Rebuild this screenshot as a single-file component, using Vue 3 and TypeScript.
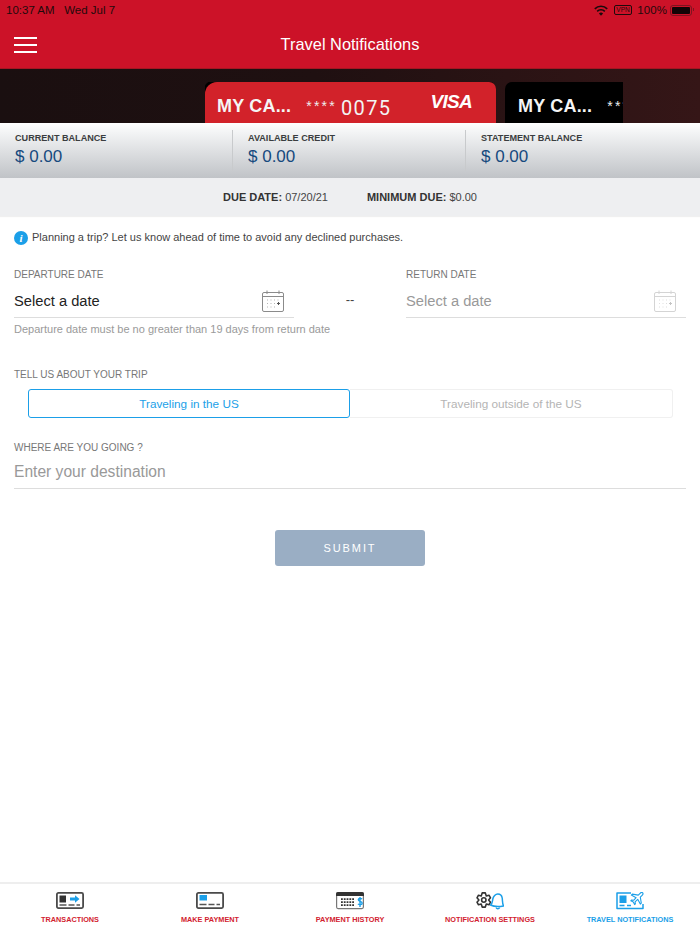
<script setup lang="ts">
const balances = [
  { label: 'CURRENT BALANCE', value: '$ 0.00' },
  { label: 'AVAILABLE CREDIT', value: '$ 0.00' },
  { label: 'STATEMENT BALANCE', value: '$ 0.00' }
]
</script>

<template>
  <div class="page">
    <header class="top">
      <div class="status">
        <span class="status-left">10:37 AM &nbsp; Wed Jul 7</span>
        <div class="status-right">
          <svg class="wifi" viewBox="0 0 14 11" width="14" height="11" fill="none" stroke="#1a0a0c" stroke-width="1.700">
            <path d="M.8 3.800a8.800 8.800 0 0 1 12.400 0"/>
            <path d="M3.200 6.300a5.400 5.400 0 0 1 7.600 0"/>
            <path d="M7 10.800 4.900 8.500a3 3 0 0 1 4.200 0z" fill="#1a0a0c" stroke="none"/>
          </svg>
          <span class="vpn">VPN</span>
          <span class="pct">100%</span>
          <span class="battery"><i></i></span>
        </div>
      </div>
      <div class="titlebar">
        <button class="burger" aria-label="Menu"><i></i><i></i><i></i></button>
        <h1>Travel Notifications</h1>
      </div>
    </header>

    <section class="cards">
      <div class="card-strip">
        <div class="card red">
          <span class="card-name">MY CA...</span>
          <span class="stars">****</span>
          <span class="digits">0075</span>
          <span class="visa">VISA</span>
        </div>
        <div class="card black">
          <span class="card-name">MY CA...</span>
          <span class="stars">****</span>
        </div>
      </div>
    </section>

    <section class="balances">
      <div v-for="b in balances" :key="b.label" class="balance">
        <div class="balance-label">{{ b.label }}</div>
        <div class="balance-value">{{ b.value }}</div>
      </div>
    </section>

    <section class="due">
      <span><b>DUE DATE:</b> 07/20/21</span>
      <span><b>MINIMUM DUE:</b> $0.00</span>
    </section>

    <main class="content">
      <p class="info">
        <span class="info-icon">i</span>
        Planning a trip? Let us know ahead of time to avoid any declined purchases.
      </p>

      <div class="dates">
        <div class="date-col">
          <label class="field-label">DEPARTURE DATE</label>
          <div class="date-input">
            <span class="date-text">Select a date</span>
            <svg class="cal" viewBox="0 0 24 24" width="24" height="24" fill="none" stroke="#8b8b8b">
              <rect x="1.500" y="3.500" width="21" height="19" rx="1.500"/>
              <path d="M1.500 7.500h21M6 1.500v3.500M18 1.500v3.500"/>
              <path d="M6 11h1M9.500 11h1M13 11h1M16.500 11h1M6 14.500h1M9.500 14.500h1M13 14.500h1M6 18h1M9.500 18h1M13 18h1" stroke="#b5b5b5"/>
              <path d="M16 14.500h3M17.500 13v3" stroke="#555"/>
            </svg>
          </div>
          <p class="hint">Departure date must be no greater than 19 days from return date</p>
        </div>
        <div class="dash">--</div>
        <div class="date-col">
          <label class="field-label">RETURN DATE</label>
          <div class="date-input">
            <span class="date-text muted">Select a date</span>
            <svg class="cal" viewBox="0 0 24 24" width="24" height="24" fill="none" stroke="#d4d4d4">
              <rect x="1.500" y="3.500" width="21" height="19" rx="1.500"/>
              <path d="M1.500 7.500h21M6 1.500v3.500M18 1.500v3.500"/>
              <path d="M6 11h1M9.500 11h1M13 11h1M16.500 11h1M6 14.500h1M9.500 14.500h1M13 14.500h1M6 18h1M9.500 18h1M13 18h1" stroke="#dedede"/>
              <path d="M16 14.500h3M17.500 13v3" stroke="#c4c4c4"/>
            </svg>
          </div>
        </div>
      </div>

      <label class="field-label trip-label">TELL US ABOUT YOUR TRIP</label>
      <div class="segments">
        <div class="segment active">Traveling in the US</div>
        <div class="segment">Traveling outside of the US</div>
      </div>

      <label class="field-label where-label">WHERE ARE YOU GOING ?</label>
      <div class="destination">Enter your destination</div>

      <button class="submit">SUBMIT</button>
    </main>

    <nav class="tabs">
      <a class="tab">
        <svg viewBox="0 0 28 18" width="28" height="18" fill="none">
          <rect x=".9" y=".9" width="26.200" height="15.200" rx="1.500" stroke="#4a4a4a" stroke-width="1.800"/>
          <rect x="3.500" y="3.500" width="6.500" height="7" fill="#333"/>
          <path d="M14 5.500h5V3.300L23.500 7 19 10.700V8.500h-5z" fill="#1b9fe8"/>
          <path d="M3.500 13h7M12.500 13h6M20.500 13h3.500" stroke="#555" stroke-width="1.300"/>
        </svg>
        <span>TRANSACTIONS</span>
      </a>
      <a class="tab">
        <svg viewBox="0 0 28 18" width="28" height="18" fill="none">
          <rect x=".9" y=".9" width="26.200" height="15.200" rx="1.500" stroke="#4a4a4a" stroke-width="1.800"/>
          <rect x="3.500" y="3" width="7.500" height="5.500" fill="#1b9fe8"/>
          <path d="M3.500 12.500h7M12.500 12.500h6M20.500 12.500h3.500" stroke="#555" stroke-width="1.300"/>
        </svg>
        <span>MAKE PAYMENT</span>
      </a>
      <a class="tab">
        <svg viewBox="0 0 28 18" width="28" height="18" fill="none">
          <rect x=".6" y=".6" width="26.800" height="16" rx="1.500" stroke="#777" stroke-width="1.200"/>
          <path d="M0 2a2 2 0 0 1 2-2h24a2 2 0 0 1 2 2v2H0z" fill="#333"/>
          <path d="M5 7.200h14M5 10.200h14M5 13.200h14" stroke="#333" stroke-width="1.800" stroke-dasharray="1.800 1"/>
          <path d="M26 7.200c-.6-1-3.700-1.200-3.700.6 0 2 3.900 1.300 3.900 3.400 0 1.900-3.300 1.800-4.200.6M24 5v10" stroke="#1b9fe8" stroke-width="1.400"/>
        </svg>
        <span>PAYMENT HISTORY</span>
      </a>
      <a class="tab">
        <svg viewBox="0 0 28 18" width="28" height="18" fill="none">
          <path d="M5.200 3.900 6.200.9h3.100l1 3 2.700-.7 1.500 2.600-1.900 2.200 1.900 2.200-1.500 2.600-2.700-.7-1 3H6.200l-1-3-2.700.7L1 10.200 2.900 8 1 5.800l1.500-2.600z" stroke="#333" stroke-width="1.600" stroke-linejoin="round"/>
          <circle cx="7.800" cy="8" r="2.200" stroke="#333" stroke-width="1.600"/>
          <path d="M14.500 13c2-1.500 1.800-3.500 2.300-6 .5-2.500 2.700-5 5-5s4 1.500 4.400 4c.4 2.500 0 5 1.300 8-4.500.8-9.500.8-13-1z" stroke="#1b9fe8" stroke-width="1.500" stroke-linejoin="round" fill="#fff"/>
          <path d="M20 15.500c.8 1.600 2.700 1.700 3.700.2" stroke="#1b9fe8" stroke-width="1.400"/>
        </svg>
        <span>NOTIFICATION SETTINGS</span>
      </a>
      <a class="tab current">
        <svg viewBox="0 0 28 18" width="28" height="18" fill="none">
          <path d="M15 1H1v15.500h26V12" stroke="#1b9fe8" stroke-width="1.500" stroke-linejoin="round"/>
          <rect x="3.500" y="3.500" width="7" height="7.500" fill="#1b9fe8"/>
          <path d="M3.500 13.500h5M11 13.500h4" stroke="#1b9fe8" stroke-width="1.300"/>
          <path d="M26.800.9c-.8-.8-2-.3-2.700.4l-1.800 1.800-6-1-1 1 4.800 2.600-2.500 2.600-2-.3-.8.800 2.500 1.300 1.300 2.500.8-.8-.3-2 2.600-2.500 2.600 4.800 1-1-1-6 1.800-1.800c.7-.7 1.400-1.400.7-2.200z" stroke="#1b9fe8" stroke-width="1.100" stroke-linejoin="round" fill="#fff"/>
        </svg>
        <span>TRAVEL NOTIFICATIONS</span>
      </a>
    </nav>
  </div>
</template>

<style>
html, body {
  margin: 0;
  background: #fff;
}
</style>

<style scoped>
.page {
  width: 700px;
  height: 934px;
  display: flex;
  flex-direction: column;
  overflow: hidden;
  font-family: "Liberation Sans", Arial, sans-serif;
  background: #fff;
}

.top {
  height: 69px;
  flex: none;
  background: #cc1228;
  box-sizing: border-box;
  border-bottom: 1px solid #a51522;
}

.status {
  height: 20px;
  padding: 0 6px;
  display: flex;
  justify-content: space-between;
  align-items: center;
  font-size: 11.500px;
  color: #1f0a0c;
}

.status-right {
  display: flex;
  align-items: center;
}

.pct {
  font-size: 11.500px;
  letter-spacing: 0.1px;
  margin-left: 5px;
}

.vpn {
  border: 1px solid #1f0a0c;
  border-radius: 2px;
  font-size: 6.500px;
  line-height: 8px;
  padding: 0 1.500px;
  margin-left: 6px;
}

.battery {
  width: 18px;
  height: 7px;
  border: 1px solid #7d1420;
  border-radius: 3px;
  padding: 1px;
  margin-left: 3px;
  margin-right: 2px;
  position: relative;
}

.battery::after {
  content: '';
  position: absolute;
  right: -3px;
  top: 2px;
  width: 1.500px;
  height: 3px;
  background: #7d1420;
}

.battery i {
  display: block;
  width: 100%;
  height: 100%;
  background: #120406;
  border-radius: 1px;
}

.titlebar {
  height: 48px;
  position: relative;
  display: flex;
  align-items: center;
  justify-content: center;
}

.titlebar h1 {
  margin: 0;
  font-size: 16.400px;
  font-weight: 400;
  color: #fff;
}

.burger {
  position: absolute;
  left: 14px;
  top: 17px;
  width: 23px;
  padding: 0;
  border: 0;
  background: none;
  display: flex;
  flex-direction: column;
  gap: 5px;
}

.burger i {
  display: block;
  height: 2px;
  background: #fff;
}

.cards {
  height: 54px;
  flex: none;
  background: linear-gradient(90deg, #1a0f10 0%, #1f1011 45%, #351617 100%);
  padding: 13px 0 0 205px;
  box-sizing: border-box;
  overflow: hidden;
}

.card-strip {
  display: flex;
  gap: 9px;
  width: 418px;
  height: 41px;
  overflow: hidden;
}

.card {
  flex: none;
  height: 41px;
  border-radius: 7px 7px 0 0;
  display: flex;
  align-items: center;
  color: #fff;
  box-sizing: border-box;
  padding-top: 8px;
  white-space: nowrap;
}

.card.red {
  width: 291px;
  background: #d2222a;
  padding-left: 12px;
  border-top-left-radius: 12px;
  box-shadow: -2px -2px 0 #000;
}

.card.black {
  width: 160px;
  background: #000;
  padding-left: 13px;
}

.card-name {
  font-size: 18px;
  font-weight: 700;
  color: #f5f5f5;
  letter-spacing: 0.2px;
}

.stars {
  font-size: 14px;
  margin-left: 15px;
  color: #eee;
  letter-spacing: 2.200px;
  position: relative;
  top: -1px;
}

.digits {
  font-family: Roboto, "Liberation Sans", sans-serif;
  font-weight: 400;
  font-size: 20px;
  letter-spacing: 1.400px;
  margin-left: 4px;
  color: #f3f3f3;
  position: relative;
  top: 1px;
}

.visa {
  font-size: 19px;
  font-weight: 700;
  font-style: italic;
  margin-left: 39px;
  letter-spacing: -0.700px;
  position: relative;
  top: -5px;
}

.balances {
  height: 55px;
  flex: none;
  display: grid;
  grid-template-columns: 233px 233px 1fr;
  background: linear-gradient(180deg, #ffffff 0%, #f4f5f6 15%, #c0c3c7 100%);
  box-sizing: border-box;
  padding-top: 7px;
}

.balance {
  padding-left: 15px;
  height: 41px;
  border-right: 1px solid #c8cacc;
}

.balance:last-child {
  border-right: 0;
}

.balance-label {
  font-size: 9.100px;
  font-weight: 700;
  color: #3a3d40;
  line-height: 11px;
  margin-top: 3px;
}

.balance-value {
  font-size: 17px;
  color: #164a7e;
  line-height: 22px;
  margin-top: 2px;
}

.due {
  height: 38px;
  flex: none;
  background: #eeeff1;
  display: flex;
  justify-content: center;
  align-items: center;
  gap: 39px;
  font-size: 11px;
  color: #444;
  box-shadow: 0 1px 1px rgba(0, 0, 0, 0.06);
}

.due b {
  color: #333;
}

.content {
  flex: 1;
  padding: 0 14px;
  display: flex;
  flex-direction: column;
}

.info {
  margin: 14px 0 0;
  display: flex;
  align-items: center;
  gap: 4px;
  font-size: 11px;
  line-height: 15px;
  color: #444;
}

.info-icon {
  width: 14px;
  height: 14px;
  border-radius: 50%;
  background: #1b9fe8;
  color: #fff;
  font: italic 700 11px/14px "Liberation Serif", serif;
  text-align: center;
}

.dates {
  display: grid;
  grid-template-columns: 280px 112px 280px;
  margin-top: 23px;
}

.field-label {
  display: block;
  font-size: 10px;
  line-height: 13px;
  color: #777;
}

.date-input {
  height: 32px;
  display: flex;
  align-items: center;
  justify-content: space-between;
  border-bottom: 1px solid #ddd;
  padding: 0 9px 0 0;
  margin-top: 4px;
}

.date-text {
  font-size: 14.700px;
  color: #222;
}

.date-text.muted {
  color: #999;
}

.hint {
  margin: 4px 0 0;
  font-size: 11px;
  line-height: 15px;
  color: #9a9a9a;
  white-space: nowrap;
}

.dash {
  text-align: center;
  font-size: 13px;
  color: #444;
  padding-top: 24px;
}

.trip-label {
  margin-top: 31px;
}

.segments {
  display: grid;
  grid-template-columns: 322px 323px;
  margin: 8px 0 0 14px;
}

.segment {
  height: 29px;
  box-sizing: border-box;
  line-height: 27px;
  text-align: center;
  font-size: 11.750px;
  color: #b4b4b4;
  border: 1px solid #f0f0f0;
  border-left: 0;
  border-radius: 0 3px 3px 0;
}

.segment.active {
  color: #1b9fe8;
  border: 1px solid #1b9fe8;
  border-radius: 3px;
}

.where-label {
  margin-top: 23px;
}

.destination {
  height: 34px;
  line-height: 36px;
  font-size: 15.600px;
  color: #999;
  border-bottom: 1px solid #ddd;
}

.submit {
  width: 150px;
  height: 36px;
  margin: 41px auto 0;
  border: 0;
  border-radius: 3px;
  background: #9aaec4;
  color: #fff;
  font: 400 11px "Liberation Sans", Arial, sans-serif;
  letter-spacing: 1.900px;
}

.tabs {
  height: 52px;
  flex: none;
  box-sizing: border-box;
  display: grid;
  grid-template-columns: repeat(5, 140px);
  border-top: 2px solid #eeeeee;
  background: #fff;
}

.tab {
  display: flex;
  flex-direction: column;
  align-items: center;
  padding-top: 8px;
  gap: 5px;
  font-size: 7.300px;
  font-weight: 700;
  color: #d2222f;
  white-space: nowrap;
}

.tab.current {
  color: #1b9fe8;
}
</style>
